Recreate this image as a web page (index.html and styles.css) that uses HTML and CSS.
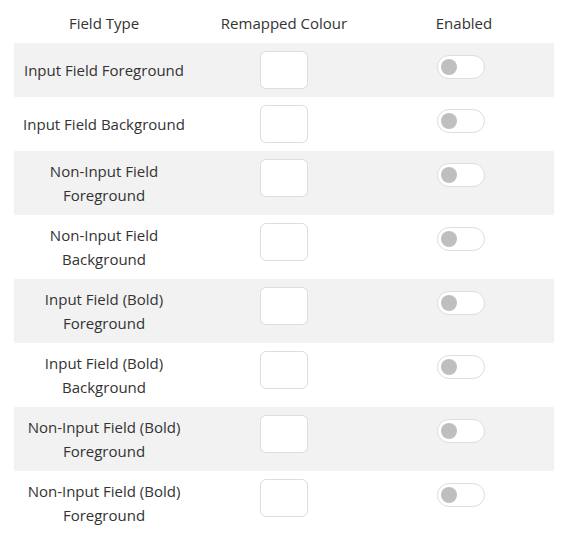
FILE: index.html
```html
<!DOCTYPE html>
<html lang="en">
<head>
    <meta charset="UTF-8">
    <title>Colour Remapping</title>
    <link rel="stylesheet" href="styles.css">
</head>
<body>

<table class="remap-table">
    <thead>
        <tr>
            <th>Field Type</th>
            <th>Remapped Colour</th>
            <th>Enabled</th>
        </tr>
    </thead>
    <tbody>
        <tr>
            <td class="field-name">Input Field Foreground</td>
            <td class="swatch-cell"><div class="swatch"></div></td>
            <td class="toggle-cell"><div class="toggle"><span class="knob"></span></div></td>
        </tr>
        <tr>
            <td class="field-name">Input Field Background</td>
            <td class="swatch-cell"><div class="swatch"></div></td>
            <td class="toggle-cell"><div class="toggle"><span class="knob"></span></div></td>
        </tr>
        <tr>
            <td class="field-name">Non-Input Field<br>Foreground</td>
            <td class="swatch-cell"><div class="swatch"></div></td>
            <td class="toggle-cell"><div class="toggle"><span class="knob"></span></div></td>
        </tr>
        <tr>
            <td class="field-name">Non-Input Field<br>Background</td>
            <td class="swatch-cell"><div class="swatch"></div></td>
            <td class="toggle-cell"><div class="toggle"><span class="knob"></span></div></td>
        </tr>
        <tr>
            <td class="field-name">Input Field (Bold)<br>Foreground</td>
            <td class="swatch-cell"><div class="swatch"></div></td>
            <td class="toggle-cell"><div class="toggle"><span class="knob"></span></div></td>
        </tr>
        <tr>
            <td class="field-name">Input Field (Bold)<br>Background</td>
            <td class="swatch-cell"><div class="swatch"></div></td>
            <td class="toggle-cell"><div class="toggle"><span class="knob"></span></div></td>
        </tr>
        <tr>
            <td class="field-name">Non-Input Field (Bold)<br>Foreground</td>
            <td class="swatch-cell"><div class="swatch"></div></td>
            <td class="toggle-cell"><div class="toggle"><span class="knob"></span></div></td>
        </tr>
        <tr>
            <td class="field-name">Non-Input Field (Bold)<br>Foreground</td>
            <td class="swatch-cell"><div class="swatch"></div></td>
            <td class="toggle-cell"><div class="toggle"><span class="knob"></span></div></td>
        </tr>
    </tbody>
</table>

</body>
</html>
```

FILE: styles.css
```css
body {
    font-family: "Open Sans", "Noto Sans", sans-serif;
    font-size: 15px;
    color: #333;
    background-color: white;
    margin: 0;
    padding: 0 14px;
}

.remap-table {
    width: 540px;
    border-collapse: collapse;
    table-layout: fixed;
}

.remap-table th {
    height: 41px;
    padding: 2px 0 0;
    font-weight: normal;
    text-align: center;
    vertical-align: middle;
    line-height: 24px;
}

.remap-table td {
    padding: 8px 0;
    text-align: center;
    line-height: 24px;
}

.remap-table tbody tr:nth-child(odd) {
    background-color: #f2f2f2;
}

.field-name {
    vertical-align: middle;
}

.swatch-cell,
.toggle-cell {
    vertical-align: top;
}

.swatch {
    display: inline-block;
    width: 46px;
    height: 36px;
    border: 1px solid #dcdce2;
    border-radius: 6px;
    background-color: white;
    vertical-align: top;
}

.toggle {
    display: inline-block;
    position: relative;
    width: 46px;
    height: 22px;
    margin-top: 4px;
    margin-left: -6px;
    border: 1px solid #dcdce2;
    border-radius: 12px;
    background-color: white;
    vertical-align: top;
}

.knob {
    position: absolute;
    top: 3px;
    left: 3px;
    width: 16px;
    height: 16px;
    border-radius: 50%;
    background-color: #bfbfbf;
}
```
